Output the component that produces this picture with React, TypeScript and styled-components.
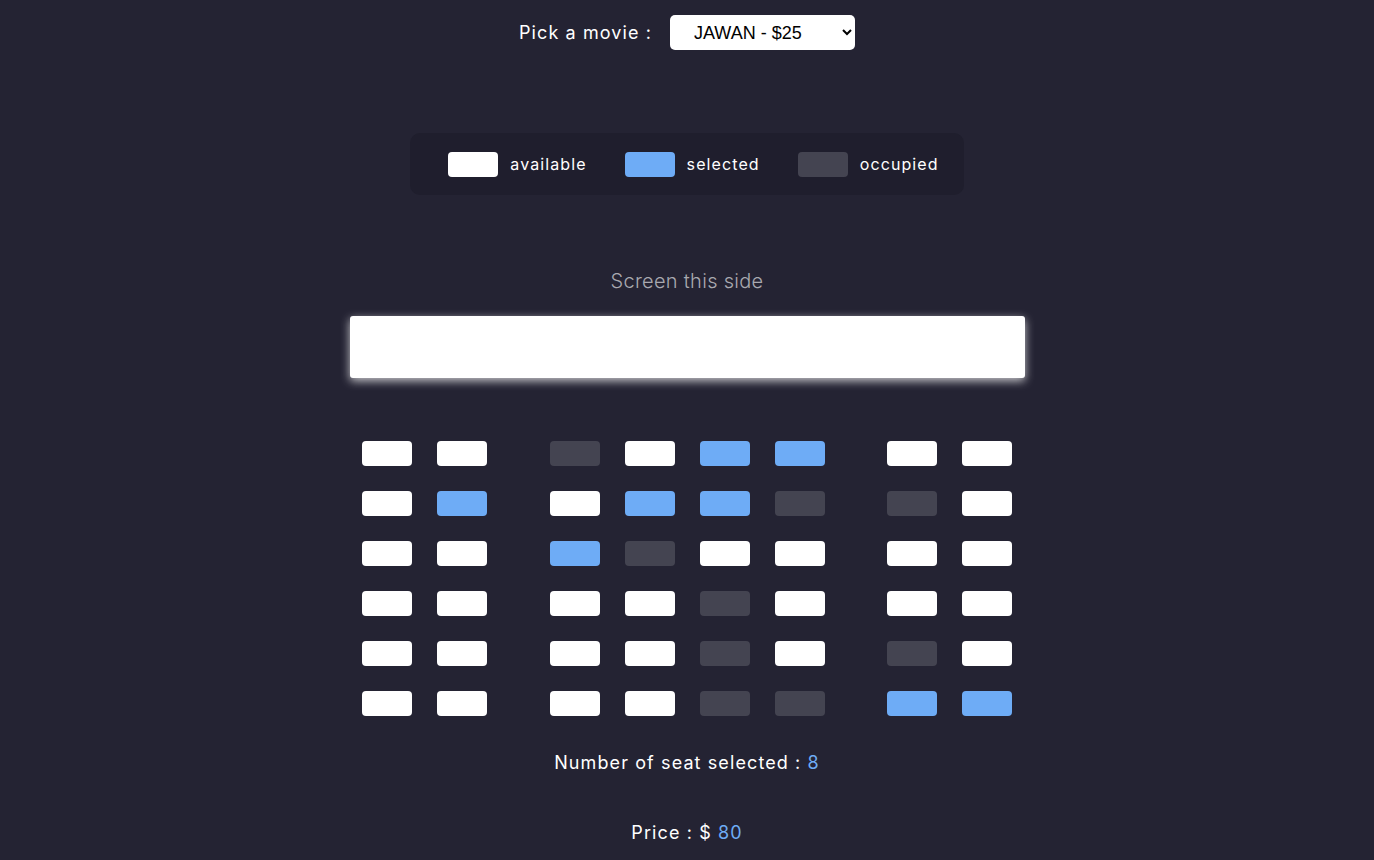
import React from 'react'
import styled, { createGlobalStyle } from 'styled-components'

type SeatState = 'a' | 's' | 'o'

// 每一行：左2 | 中4 | 右2
const ROWS: SeatState[][][] = [
  [['a', 'a'], ['o', 'a', 's', 's'], ['a', 'a']],
  [['a', 's'], ['a', 's', 's', 'o'], ['o', 'a']],
  [['a', 'a'], ['s', 'o', 'a', 'a'], ['a', 'a']],
  [['a', 'a'], ['a', 'a', 'o', 'a'], ['a', 'a']],
  [['a', 'a'], ['a', 'a', 'o', 'a'], ['o', 'a']],
  [['a', 'a'], ['a', 'a', 'o', 'o'], ['s', 's']]
]

const seatColor = (s: SeatState) => (s === 's' ? '#6eacf6' : s === 'o' ? '#444451' : '#ffffff')

const GlobalStyle = createGlobalStyle`
  html, body {
    margin: 0;
    padding: 0;
    background: #242333;
  }
  body {
    font-family: Inter, 'Open Sans', sans-serif;
    color: #fff;
  }
`

const App: React.FC = () => {
  const [movie, setMovie] = React.useState('25')
  const selected = ROWS.flat(2).filter((s) => s === 's').length

  return (
    <Page>
      <GlobalStyle />
      <MovieRow>
        <MovieLabel>Pick a movie :</MovieLabel>
        <MovieSelect value={movie} onChange={(e) => setMovie(e.target.value)}>
          <option value="25">JAWAN - $25</option>
          <option value="20">PATHAAN - $20</option>
          <option value="15">TIGER 3 - $15</option>
        </MovieSelect>
      </MovieRow>

      <Showcase>
        <LegendItem>
          <Swatch $color={seatColor('a')} />
          <LegendText>available</LegendText>
        </LegendItem>
        <LegendItem>
          <Swatch $color={seatColor('s')} />
          <LegendText>selected</LegendText>
        </LegendItem>
        <LegendItem>
          <Swatch $color={seatColor('o')} />
          <LegendText>occupied</LegendText>
        </LegendItem>
      </Showcase>

      <ScreenLabel>Screen this side</ScreenLabel>
      <Screen />

      <SeatGrid>
        {ROWS.map((row, r) => (
          <SeatRow key={r}>
            {row.map((block, b) => (
              <SeatBlock key={b}>
                {block.map((s, i) => (
                  <Seat key={i} $color={seatColor(s)} />
                ))}
              </SeatBlock>
            ))}
          </SeatRow>
        ))}
      </SeatGrid>

      <Summary>
        Number of seat selected : <Value>{selected}</Value>
      </Summary>
      <PriceLine>
        Price : $ <Value>80</Value>
      </PriceLine>
    </Page>
  )
}

const Page = styled.div`
  display: flex;
  flex-direction: column;
  align-items: center;
  padding-top: 15px;
  min-height: 860px;
  box-sizing: border-box;
`

const MovieRow = styled.div`
  display: flex;
  align-items: center;
  gap: 18px;
  height: 35px;
`

const MovieLabel = styled.label`
  font-size: 18px;
  font-weight: 400;
  color: #fff;
  letter-spacing: 1.1px;
`

const MovieSelect = styled.select`
  width: 185px;
  height: 35px;
  border: 0;
  border-radius: 5px;
  background: #fff;
  color: #000;
  font-family: 'Liberation Sans', Arial, sans-serif;
  font-size: 18px;
  padding: 0 8px 0 20px;
  outline: none;
`

const Showcase = styled.ul`
  display: flex;
  align-items: center;
  gap: 38px;
  list-style: none;
  margin: 83px 0 0;
  padding: 0 25px 0 38px;
  height: 62px;
  border-radius: 10px;
  background: #1f1e2d;
`

const LegendItem = styled.li`
  display: flex;
  align-items: center;
  gap: 12px;
`

const Swatch = styled.div<{ $color: string }>`
  width: 50px;
  height: 25px;
  border-radius: 4px;
  background: ${(p) => p.$color};
`

const LegendText = styled.span`
  font-size: 16px;
  letter-spacing: 1.1px;
  color: #fff;
`

const ScreenLabel = styled.div`
  margin-top: 71px;
  height: 30px;
  line-height: 30px;
  font-size: 20px;
  font-weight: 300;
  letter-spacing: 0.3px;
  color: #a9a9b0;
`

const Screen = styled.div`
  margin-top: 20px;
  width: 675px;
  height: 62px;
  border-radius: 3px;
  background: #fff;
  box-shadow: 0 3px 10px rgba(255, 255, 255, 0.75);
`

const SeatGrid = styled.div`
  margin-top: 63px;
  display: flex;
  flex-direction: column;
  gap: 25px;
`

const SeatRow = styled.div`
  display: flex;
  gap: 62.5px;
`

const SeatBlock = styled.div`
  display: flex;
  gap: 25px;
`

const Seat = styled.div<{ $color: string }>`
  width: 50px;
  height: 25px;
  border-radius: 4px;
  background: ${(p) => p.$color};
`

const Summary = styled.p`
  margin: 32px 0 0;
  height: 30px;
  line-height: 30px;
  font-size: 18px;
  font-weight: 400;
  letter-spacing: 1.1px;
`

const PriceLine = styled(Summary)`
  margin-top: 40px;
`

const Value = styled.span`
  color: #6eacf6;
`

export default App
